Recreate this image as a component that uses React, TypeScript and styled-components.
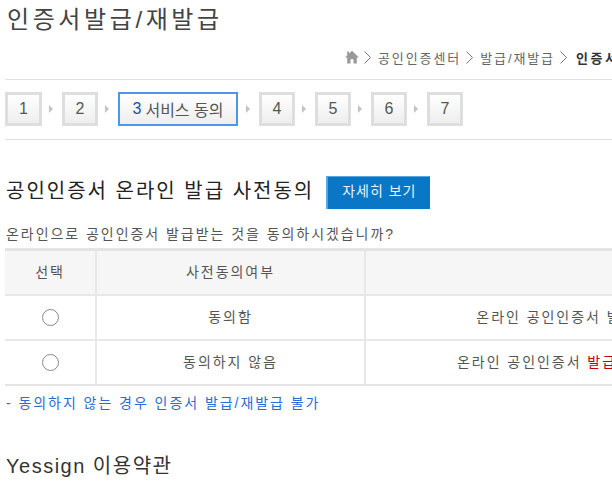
import React from "react";
import styled, { createGlobalStyle } from "styled-components";

const GlobalStyle = createGlobalStyle`
  html, body {
    margin: 0;
    padding: 0;
    height: 100%;
    overflow: hidden;
    background: #fff;
  }
  body {
    font-family: "Liberation Sans", "Noto Sans CJK KR", sans-serif;
    color: #444;
  }
`;

const STEPS = ["1", "2", "3", "4", "5", "6", "7"];

const Chevron = () => (
  <ChevronIcon viewBox="0 0 7 13" aria-hidden="true">
    <polyline points="0.5,0.5 6.5,6.5 0.5,12.5" fill="none" stroke="#777" strokeWidth="1" />
  </ChevronIcon>
);

const App = () => {
  return (
    <Page>
      <GlobalStyle />
      <Title>인증서발급/재발급</Title>

      <Breadcrumb>
        <svg width="14" height="14" viewBox="0 0 14 14" aria-hidden="true">
          <path d="M7 0.8 L14 7.4 H11.8 V13.4 H8.5 V9.2 H5.5 V13.4 H2.2 V7.4 H0 L2.2 5.3 V1.6 H4 V3.6 Z" fill="#999" />
        </svg>
        <Chevron />
        <Crumb>공인인증센터</Crumb>
        <Chevron />
        <Crumb>발급/재발급</Crumb>
        <Chevron />
        <CurrentCrumb>인증서발급/재발급</CurrentCrumb>
      </Breadcrumb>

      <StepBar>
        {STEPS.map((step, i) => (
          <React.Fragment key={step}>
            {i > 0 && <StepArrow />}
            {step === "3" ? (
              <StepBox $active>
                <b>3</b> 서비스 동의
              </StepBox>
            ) : (
              <StepBox>{step}</StepBox>
            )}
          </React.Fragment>
        ))}
      </StepBar>

      <HeadingRow>
        <Heading>공인인증서 온라인 발급 사전동의</Heading>
        <DetailButton>자세히 보기</DetailButton>
      </HeadingRow>

      <Question>온라인으로 공인인증서 발급받는 것을 동의하시겠습니까?</Question>

      <Table>
        <colgroup>
          <col style={{ width: 90 }} />
          <col style={{ width: 269 }} />
          <col />
        </colgroup>
        <thead>
          <tr>
            <th>선택</th>
            <th>사전동의여부</th>
            <th>설명</th>
          </tr>
        </thead>
        <tbody>
          <tr>
            <td>
              <Radio />
            </td>
            <td>동의함</td>
            <td>온라인 공인인증서 발급/재발급 서비스 이용이 가능함</td>
          </tr>
          <tr>
            <td>
              <Radio />
            </td>
            <td>동의하지 않음</td>
            <td>
              온라인 공인인증서 <RedText>발급/재발급 서비스이용이 불가능합니다</RedText>
            </td>
          </tr>
        </tbody>
      </Table>

      <Note>- 동의하지 않는 경우 인증서 발급/재발급 불가</Note>

      <SubHeading>Yessign 이용약관</SubHeading>
    </Page>
  );
};

export default App;

const Page = styled.div`
  width: 948px;
  padding-left: 5px;
  box-sizing: border-box;
`;

const Title = styled.h1`
  margin: 0;
  padding: 5px 0 0 2px;
  font-size: 24px;
  line-height: 30px;
  font-weight: 400;
  color: #444;
  letter-spacing: 3.6px;
`;

const Breadcrumb = styled.div`
  display: flex;
  align-items: center;
  height: 20px;
  margin-top: 12px;
  padding-left: 340px;
  font-size: 13px;
  letter-spacing: 1.9px;
  color: #666;
`;

const ChevronIcon = styled.svg`
  width: 7px;
  height: 13px;
  margin: 0 7px 0 5px;
`;

const Crumb = styled.span`
  white-space: nowrap;
`;

const CurrentCrumb = styled.strong`
  margin-left: 2px;
  color: #333;
  letter-spacing: 2.6px;
  white-space: nowrap;
`;

const StepBar = styled.div`
  display: flex;
  align-items: center;
  box-sizing: border-box;
  height: 61px;
  margin-top: 12px;
  padding-bottom: 1px;
  border-top: 1px solid #e2e2e2;
  border-bottom: 1px solid #e2e2e2;
`;

const StepBox = styled.div<{ $active?: boolean }>`
  box-sizing: border-box;
  width: ${(p) => (p.$active ? "120px" : "36px")};
  height: 34px;
  margin-right: ${(p) => (p.$active ? "1px" : "0")};
  display: flex;
  align-items: center;
  justify-content: center;
  gap: 4px;
  font-size: 16px;
  color: #555;
  border: ${(p) => (p.$active ? "2px solid #4a97f0" : "3px solid #dedede")};
  background: linear-gradient(#fff, #eee);
  white-space: nowrap;

  &:first-child {
    width: 37px;
  }

  b {
    font-weight: 400;
    color: #1f4fa0;
  }
`;

const StepArrow = styled.span`
  width: 0;
  height: 0;
  margin: 0 9px 0 7px;
  border-left: 4px solid #c4c4c4;
  border-top: 4px solid transparent;
  border-bottom: 4px solid transparent;
`;

const HeadingRow = styled.div`
  display: flex;
  align-items: center;
  margin-top: 35px;
  gap: 12px;
`;

const Heading = styled.h2`
  margin: 0 0 6px 1px;
  font-size: 20px;
  font-weight: 400;
  color: #222;
  letter-spacing: 2px;
  white-space: nowrap;
`;

const DetailButton = styled.button`
  box-sizing: border-box;
  width: 104px;
  height: 33px;
  padding: 0 0 7px;
  border: 0;
  border-top: 1px solid #5aa6df;
  border-left: 2px solid #5aa6df;
  background: #0a76c6;
  color: #e8f2fb;
  font-family: inherit;
  font-size: 14px;
  letter-spacing: 1px;
`;

const Question = styled.p`
  margin: 14px 0 0 1px;
  font-size: 14px;
  line-height: 20px;
  letter-spacing: 1.95px;
  color: #555;
`;

const Table = styled.table`
  width: 100%;
  margin-top: 4px;
  table-layout: fixed;
  border-collapse: separate;
  border-spacing: 0;
  border-top: 3px solid #e4e4e4;
  border-bottom: 2px solid #e4e4e4;
  font-size: 14px;
  letter-spacing: 1.95px;
  color: #555;

  th,
  td {
    box-sizing: border-box;
    padding: 0 0 4px;
    text-align: center;
    font-weight: 400;
    border-left: 2px solid #e8e8e8;
    white-space: nowrap;
  }
  th:first-child,
  td:first-child {
    border-left: 0;
  }
  th {
    height: 45px;
    background: #f6f6f6;
    border-bottom: 2px solid #e8e8e8;
  }
  td {
    height: 43px;
  }
  tbody tr + tr td {
    height: 45px;
    border-top: 2px solid #e8e8e8;
  }
`;

const Radio = styled.span`
  display: inline-block;
  box-sizing: border-box;
  width: 17px;
  height: 17px;
  margin-top: 4px;
  vertical-align: middle;
  border: 1.5px solid #888;
  border-radius: 50%;
  background: #fff;
`;

const RedText = styled.span`
  color: #c00000;
`;

const Note = styled.p`
  margin: 7px 0 0 1px;
  font-size: 14px;
  line-height: 20px;
  letter-spacing: 1.95px;
  color: #2a6bd6;
`;

const SubHeading = styled.h3`
  margin: 38px 0 0 1px;
  font-size: 20px;
  line-height: 30px;
  font-weight: 400;
  letter-spacing: 1.5px;
  color: #333;
`;
